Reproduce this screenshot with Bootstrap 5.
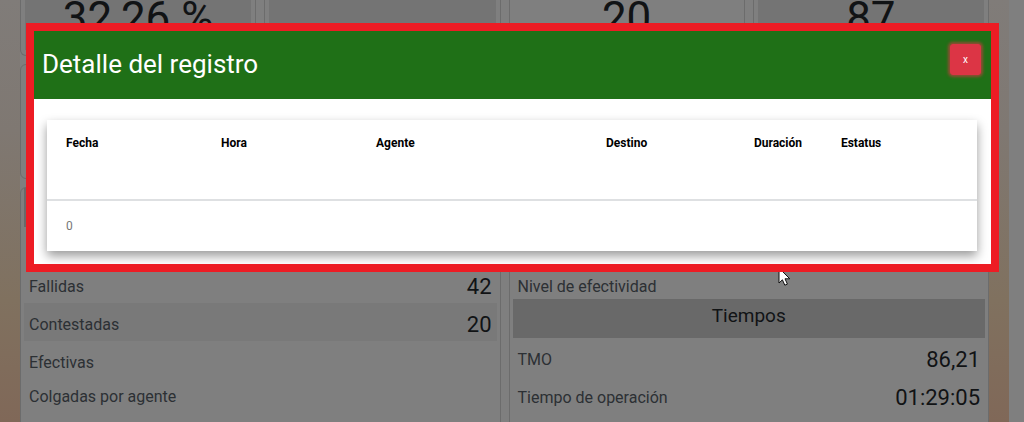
<!DOCTYPE html>
<html lang="es">
<head>
<meta charset="utf-8">
<meta name="viewport" content="width=device-width, initial-scale=1">
<title>Detalle del registro</title>
<link href="https://cdn.jsdelivr.net/npm/bootstrap@5.3.0/dist/css/bootstrap.min.css" rel="stylesheet">
<style>
  body { font-family: Roboto, "Liberation Sans", sans-serif; background: #7f7f7f; color: #111315; }
  .viewport { height: 100vh; }
  .dashboard { margin-right: 15px; padding: 0 20px; background: linear-gradient(#807c79 0, #7f7872 130px, #80715f 300px, #806858 422px); }
  .board { background: #7f7f7f; }
  .stack { gap: 8px; }
  .panel { background: #7f7f7f; border: 1px solid #6c6c6c; border-radius: 6px; }
  .kpi-panel { border-top: 0; border-radius: 0 0 6px 6px; padding: 0 4px 4px; height: 56px; }
  .kpi { background: #747474; height: 50px; font-size: 44px; line-height: 36px; }
  .kpi-plain { background: none; }
  .filter-panel { height: 115px; }
  .data-panel { padding: 0 3px; min-height: 246px; }
  .band { background: #696969; height: 39px; font-size: 19px; line-height: 34px; }
  .stat { min-height: 34px; padding: 10px 5px 0; line-height: 24px; color: #2c3034; }
  .stat-blank { height: 38px; }
  .stat-value { height: 28px; font-size: 22px; color: #111315; }
  .stat-alt { background: #797979; }
  .detail { top: 23px; left: 26px; right: 25px; border: 8px solid #ed1c24; z-index: 20; }
  .detail-head { background: #1f7017; height: 68px; padding: 13px 10px 0 8px; }
  .detail-title { font-size: 26px; line-height: 40px; font-weight: 400; }
  .close-btn { width: 31px; height: 31px; padding: 0; font-size: 10px; line-height: 1; border-radius: 3px; box-shadow: 0 0 3px 2px rgba(220, 53, 69, .6); }
  .detail-body { padding: 21px 14px 13px 13px; }
  .sheet { box-shadow: 0 5px 10px 0 rgba(0, 0, 0, .4); background: #fff; }
  .log { table-layout: fixed; font-size: 12px; line-height: 18px; }
  .log th, .log td { padding: 14px 19px; }
  .log thead th { height: 80px; border-bottom: 2px solid #dee0e2; color: #000; vertical-align: top; }
  .log tbody td { height: 50px; padding: 16px 19px; color: #777; border: 0; }
  .pointer { left: 778px; top: 267px; z-index: 10; }
</style>
</head>
<body class="overflow-hidden">
<div class="viewport position-relative overflow-hidden">
  <main class="dashboard">
   <div class="board d-flex flex-column stack">
    <section class="d-flex stack text-center">
      <div class="panel kpi-panel flex-fill w-25"><div class="kpi">32,26 %</div></div>
      <div class="panel kpi-panel flex-fill w-25"><div class="kpi"></div></div>
      <div class="panel kpi-panel flex-fill w-25"><div class="kpi kpi-plain">20</div></div>
      <div class="panel kpi-panel flex-fill w-25"><div class="kpi">87</div></div>
    </section>
    <section class="panel filter-panel"></section>
    <section class="d-flex stack">
      <div class="panel data-panel flex-fill w-50">
        <div class="band"></div>
        <div class="stat stat-blank"></div>
        <div class="stat d-flex justify-content-between"><span>Fallidas</span><span class="stat-value">42</span></div>
        <div class="stat stat-alt d-flex justify-content-between"><span>Contestadas</span><span class="stat-value">20</span></div>
        <div class="stat">Efectivas</div>
        <div class="stat">Colgadas por agente</div>
      </div>
      <div class="panel data-panel flex-fill w-50">
        <div class="band"></div>
        <div class="stat stat-blank"></div>
        <div class="stat">Nivel de efectividad</div>
        <div class="band text-center">Tiempos</div>
        <div class="stat d-flex justify-content-between"><span>TMO</span><span class="stat-value">86,21</span></div>
        <div class="stat d-flex justify-content-between"><span>Tiempo de operación</span><span class="stat-value">01:29:05</span></div>
      </div>
    </section>
   </div>
  </main>

  <svg class="pointer position-absolute" width="14" height="20" viewBox="0 0 14 20" aria-hidden="true">
    <path d="M1 1v15l3.4-3.2 2.4 5.4 2.6-1.1-2.4-5.3h4.8z" fill="#fff" stroke="#111" stroke-width="1"/>
  </svg>

  <div class="detail position-absolute bg-white overflow-hidden" role="dialog" aria-labelledby="detail-title">
    <header class="detail-head d-flex justify-content-between align-items-start text-white">
      <h1 class="detail-title m-0" id="detail-title">Detalle del registro</h1>
      <button type="button" class="btn btn-danger close-btn" aria-label="Cerrar">x</button>
    </header>
    <div class="detail-body">
      <div class="sheet">
        <table class="table log mb-0">
          <colgroup>
            <col style="width:16.67%"><col style="width:16.67%"><col style="width:24.73%"><col style="width:15.91%"><col style="width:9.35%"><col style="width:16.67%">
          </colgroup>
          <thead>
            <tr><th>Fecha</th><th>Hora</th><th>Agente</th><th>Destino</th><th>Duración</th><th>Estatus</th></tr>
          </thead>
          <tbody>
            <tr><td colspan="6">0</td></tr>
          </tbody>
        </table>
      </div>
    </div>
  </div>
</div>
<script src="https://cdn.jsdelivr.net/npm/bootstrap@5.3.0/dist/js/bootstrap.bundle.min.js"></script>
</body>
</html>
